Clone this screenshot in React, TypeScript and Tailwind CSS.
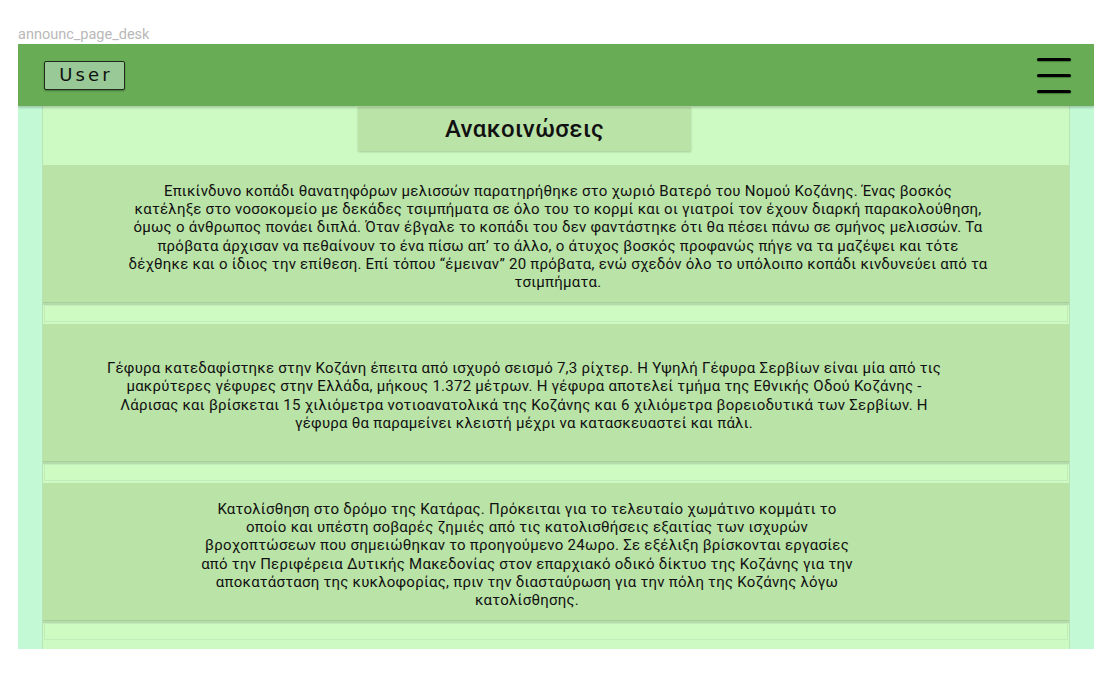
const cards = [
  {
    pad: "pl-[4px]",
    lines: [
      "Επικίνδυνο κοπάδι θανατηφόρων μελισσών παρατηρήθηκε στο χωριό Βατερό του Νομού Κοζάνης. Ένας βοσκός",
      "κατέληξε στο νοσοκομείο με δεκάδες τσιμπήματα σε όλο του το κορμί και οι γιατροί τον έχουν διαρκή παρακολούθηση,",
      "όμως ο άνθρωπος πονάει διπλά. Όταν έβγαλε το κοπάδι του δεν φαντάστηκε ότι θα πέσει πάνω σε σμήνος μελισσών. Τα",
      "πρόβατα άρχισαν να πεθαίνουν το ένα πίσω απ’ το άλλο, ο άτυχος βοσκός προφανώς πήγε να τα μαζέψει και τότε",
      "δέχθηκε και ο ίδιος την επίθεση. Επί τόπου “έμειναν” 20 πρόβατα, ενώ σχεδόν όλο το υπόλοιπο κοπάδι κινδυνεύει από τα",
      "τσιμπήματα.",
    ],
  },
  {
    pad: "pr-[64px]",
    lines: [
      "Γέφυρα κατεδαφίστηκε στην Κοζάνη έπειτα από ισχυρό σεισμό 7,3 ρίχτερ. Η Υψηλή Γέφυρα Σερβίων είναι μία από τις",
      "μακρύτερες γέφυρες στην Ελλάδα, μήκους 1.372 μέτρων. Η γέφυρα αποτελεί τμήμα της Εθνικής Οδού Κοζάνης -",
      "Λάρισας και βρίσκεται 15 χιλιόμετρα νοτιοανατολικά της Κοζάνης και 6 χιλιόμετρα βορειοδυτικά των Σερβίων. Η",
      "γέφυρα θα παραμείνει κλειστή μέχρι να κατασκευαστεί και πάλι.",
    ],
  },
  {
    pad: "pr-[58px]",
    lines: [
      "Κατολίσθηση στο δρόμο της Κατάρας. Πρόκειται για το τελευταίο χωμάτινο κομμάτι το",
      "οποίο και υπέστη σοβαρές ζημιές από τις κατολισθήσεις εξαιτίας των ισχυρών",
      "βροχοπτώσεων που σημειώθηκαν το προηγούμενο 24ωρο. Σε εξέλιξη βρίσκονται εργασίες",
      "από την Περιφέρεια Δυτικής Μακεδονίας στον επαρχιακό οδικό δίκτυο της Κοζάνης για την",
      "αποκατάσταση της κυκλοφορίας, πριν την διασταύρωση για την πόλη της Κοζάνης λόγω",
      "κατολίσθησης.",
    ],
  },
];

const App = () => {
  return (
    <div className="min-h-screen w-[1119px] h-[692px] bg-white font-['Roboto',sans-serif] overflow-hidden">
      <div className="ml-[18px] pt-[25px] h-[19px] box-content text-[14.5px] leading-[19px] text-[#b8b8b8]">
        announc_page_desk
      </div>
      <div className="ml-[18px] w-[1076px] h-[605px] bg-[#c3f9d4] flex flex-col overflow-hidden">
        <header className="relative z-10 h-[62px] shrink-0 bg-[#68ad55] shadow-[0_2px_2px_rgba(0,0,0,0.18)] flex items-center justify-between pl-[26px] pr-[23px]">
          <button className="w-[81px] h-[29px] pl-[3px] bg-[#98c996] border border-[#1f2a1c] rounded-[2px] shadow-[0_1px_2px_rgba(0,0,0,0.35)] text-[18px] leading-none tracking-[0.17em] text-[#111] font-['DejaVu_Sans',sans-serif] font-normal">
            User
          </button>
          <div className="flex flex-col gap-[13px] w-[34px]">
            <span className="block h-[3px] bg-black rounded-sm shadow-[0_1px_1px_rgba(0,0,0,0.3)]" />
            <span className="block h-[3px] bg-black rounded-sm shadow-[0_1px_1px_rgba(0,0,0,0.3)]" />
            <span className="block h-[3px] bg-black rounded-sm shadow-[0_1px_1px_rgba(0,0,0,0.3)]" />
          </div>
        </header>
        <main className="mx-[24px] flex-1 bg-[#cdfac3] border-x border-[#b8e4b4] flex flex-col overflow-hidden">
          <div className="ml-[315px] mt-[1px] w-[333px] h-[44px] bg-[#bae3a7] shadow-[0_1px_2px_rgba(0,0,0,0.2)] flex items-center justify-center text-[24px] tracking-[0.4px] font-medium text-[#111]">
            Ανακοινώσεις
          </div>
          <div className="mt-[14px] flex flex-col">
            {cards.map((c, i) => (
              <div key={i}>
                <div className={`h-[138px] pt-[6px] bg-[#bae3a7] shadow-[0_2px_1px_rgba(0,0,0,0.12)] border-b border-[#a8cf98] flex flex-col items-center justify-center ${c.pad}`}>
                  {c.lines.map((l, j) => (
                    <span key={j} className="block whitespace-nowrap text-center text-[15px] tracking-[0.25px] leading-[18.3px] text-[#111]">
                      {l}
                    </span>
                  ))}
                </div>
                <div className="h-[21px] px-[1px] pt-[2px]">
                  <div className="h-[17px] bg-[#cefbc2] border border-[#c4ecbb]" />
                </div>
              </div>
            ))}
          </div>
        </main>
      </div>
    </div>
  );
};

export default App;
